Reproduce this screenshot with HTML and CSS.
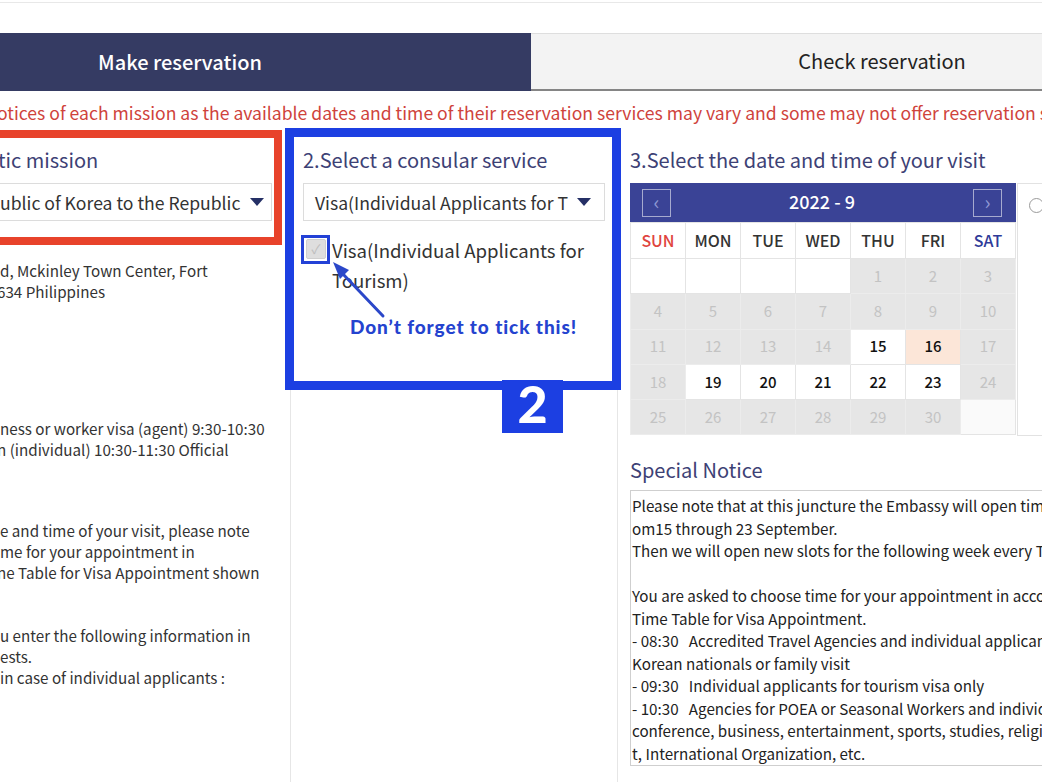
FILE: index.html
```html
<!DOCTYPE html>
<html lang="en">
<head>
<meta charset="utf-8">
<title>Reservation</title>
<link rel="stylesheet" href="styles.css">
</head>
<body>
<div class="topbar"></div>
<nav class="tabs">
  <div class="tab tab-active">Make reservation</div>
  <div class="tab tab-idle">Check reservation</div>
</nav>
<p class="warn">otices of each mission as the available dates and time of their reservation services may vary and some may not offer reservation services.</p>

<main class="cols">
  <section class="col col1">
    <h2 class="heading heading-cut">tic mission</h2>
    <div class="select select-cut"><span>ublic of Korea to the Republic</span><i class="caret"></i></div>
    <div class="info">
      <div class="ln">d, Mckinley Town Center, Fort</div>
      <div class="ln ln-cut">634 Philippines</div>
      <div class="gap gap-a"></div>
      <div class="ln">ness or worker visa (agent) 9:30-10:30</div>
      <div class="ln ln-cut">n (individual) 10:30-11:30 Official</div>
      <div class="gap gap-b"></div>
      <div class="ln">e and time of your visit, please note</div>
      <div class="ln">me for your appointment in</div>
      <div class="ln ln-cut">ne Table for Visa Appointment shown</div>
      <div class="gap gap-c"></div>
      <div class="ln">u enter the following information in</div>
      <div class="ln">ests.</div>
      <div class="ln">in case of individual applicants :</div>
    </div>
  </section>

  <section class="col col2">
    <h2 class="heading">2.Select a consular service</h2>
    <div class="select"><span>Visa(Individual Applicants for T</span><i class="caret"></i></div>
    <label class="check">
      <span class="box">&#10003;</span>
      <span class="check-label">Visa(Individual Applicants for Tourism)</span>
    </label>
  </section>

  <section class="col col3">
    <h2 class="heading">3.Select the date and time of your visit</h2>
    <div class="cal-row">
      <div class="calendar">
        <div class="cal-nav">
          <span class="nav-btn">&lsaquo;</span>
          <span class="cal-title">2022 - 9</span>
          <span class="nav-btn">&rsaquo;</span>
        </div>
        <table class="cal-table">
          <thead>
            <tr><th class="sun">SUN</th><th>MON</th><th>TUE</th><th>WED</th><th>THU</th><th>FRI</th><th class="sat">SAT</th></tr>
          </thead>
          <tbody>
            <tr><td class="empty"></td><td class="empty"></td><td class="empty"></td><td class="empty"></td><td class="off">1</td><td class="off">2</td><td class="off">3</td></tr>
            <tr><td class="off">4</td><td class="off">5</td><td class="off">6</td><td class="off">7</td><td class="off">8</td><td class="off">9</td><td class="off">10</td></tr>
            <tr><td class="off">11</td><td class="off">12</td><td class="off">13</td><td class="off">14</td><td class="on">15</td><td class="on sel">16</td><td class="off">17</td></tr>
            <tr><td class="off">18</td><td class="on">19</td><td class="on">20</td><td class="on">21</td><td class="on">22</td><td class="on">23</td><td class="off">24</td></tr>
            <tr><td class="off">25</td><td class="off">26</td><td class="off">27</td><td class="off">28</td><td class="off">29</td><td class="off">30</td><td class="empty2"></td></tr>
          </tbody>
        </table>
      </div>
      <div class="times"><span class="radio"></span></div>
    </div>
    <h2 class="heading heading-notice">Special Notice</h2>
    <div class="notice">Please note that at this juncture the Embassy will open time slots
om15 through 23 September.
Then we will open new slots for the following week every Thursday.

You are asked to choose time for your appointment in accordance with the
Time Table for Visa Appointment.
- 08:30   Accredited Travel Agencies and individual applicants
Korean nationals or family visit
- 09:30   Individual applicants for tourism visa only
- 10:30   Agencies for POEA or Seasonal Workers and individuals
conference, business, entertainment, sports, studies, religious
t, International Organization, etc.</div>
  </section>
</main>

<div class="mark mark-red"></div>
<div class="mark mark-blue"></div>
<div class="mark-badge">2</div>
<div class="mark-tick"></div>
<div class="mark-note">Don’t forget to tick this!</div>
<svg class="mark-arrow" width="1042" height="782" viewBox="0 0 1042 782">
  <line x1="342" y1="273" x2="383" y2="316" stroke="#2b47c9" stroke-width="3" stroke-linecap="round"/>
  <polygon points="333,262 349,270 340,279" fill="#2b47c9"/>
</svg>
</body>
</html>
```

FILE: styles.css
```css
* { box-sizing: border-box; }

body {
  margin: 0;
  width: 1042px;
  height: 782px;
  overflow: hidden;
  position: relative;
  background: #fff;
  font-family: "Noto Sans CJK KR", "Noto Sans", sans-serif;
  color: #333;
}

.topbar {
  height: 3px;
  border-bottom: 1px solid #e8e8e8;
}

.tabs {
  display: flex;
  margin: 30px 0 0 -171px;
  width: 1404px;
  height: 58px;
}

.tab {
  flex: 0 0 702px;
  display: flex;
  align-items: center;
  justify-content: center;
  font-size: 20px;
  padding-bottom: 2px;
}

.tab-active {
  background: #353b63;
  color: #fff;
  font-weight: 500;
}

.tab-idle {
  background: #f3f3f3;
  border-top: 1px solid #dedede;
  border-bottom: 2px solid #858585;
  color: #222;
}

.warn {
  margin: 10px 0 0 -3px;
  font-size: 17.6px;
  line-height: 24px;
  color: #cf433c;
  white-space: nowrap;
}

.cols {
  display: flex;
  margin-top: 8px;
  height: 649px;
}

.col { padding-top: 13px; }

.col1 {
  flex: 0 0 290px;
  padding-right: 18px;
}

.col2 {
  flex: 0 0 328px;
  border-left: 1px solid #e6e6e6;
  border-right: 1px solid #e6e6e6;
  padding-left: 12px;
  padding-right: 12px;
}

.col3 {
  flex: 0 0 600px;
  margin-left: 12px;
}

.heading {
  margin: 0 0 9px;
  font-size: 20px;
  line-height: 28px;
  font-weight: 400;
  color: #3d4175;
  white-space: nowrap;
}

.heading-cut { text-indent: -2px; }

.select {
  height: 38px;
  border: 1px solid #dcdcdc;
  display: flex;
  align-items: center;
  justify-content: space-between;
  padding: 0 13px 0 11px;
  font-size: 17.6px;
  color: #333;
  white-space: nowrap;
  overflow: hidden;
}

.select-cut {
  border-left: none;
  padding: 0 7px 0 0;
}

.caret {
  width: 0;
  height: 0;
  border-left: 7px solid transparent;
  border-right: 7px solid transparent;
  border-top: 8px solid #253066;
  flex: 0 0 auto;
}

.info {
  margin-top: 39px;
  font-size: 15.2px;
  line-height: 21px;
  color: #333;
  white-space: nowrap;
}

.ln-cut { text-indent: -3px; }
.gap-a { height: 116px; }
.gap-b { height: 60px; }
.gap-c { height: 42px; }

.check {
  display: flex;
  align-items: flex-start;
  gap: 6px;
  margin-top: 14px;
  padding-left: 3px;
}

.box {
  flex: 0 0 20px;
  height: 20px;
  margin-top: 4px;
  background: #dedede;
  border: 1px solid #cfcfcf;
  border-radius: 2px;
  color: #bdbdbd;
  font-size: 13px;
  line-height: 18px;
  text-align: center;
}

.check-label {
  font-size: 18.6px;
  line-height: 30px;
  color: #333;
}

.cal-row {
  display: flex;
  height: 253px;
}

.calendar {
  flex: 0 0 386px;
}

.cal-nav {
  height: 39px;
  background: #3a4396;
  display: flex;
  align-items: center;
  justify-content: space-between;
  padding: 0 14px 0 12px;
}

.nav-btn {
  width: 29px;
  height: 28px;
  border: 1px solid rgba(255, 255, 255, 0.55);
  color: #8f98d4;
  font-size: 20px;
  line-height: 24px;
  text-align: center;
}

.cal-title {
  color: #fff;
  font-size: 18px;
  font-weight: 500;
  padding-bottom: 4px;
}

.cal-table {
  width: 386px;
  border-collapse: collapse;
  table-layout: fixed;
}

.cal-table th,
.cal-table td {
  border: 1px solid #e4e4e4;
  text-align: center;
  padding: 0;
}

.cal-table th {
  height: 36px;
  padding-bottom: 2px;
  font-size: 16px;
  font-weight: 500;
  color: #333;
  background: #fff;
}

.cal-table th.sun { color: #e0443e; }
.cal-table th.sat { color: #2f3b99; }

.cal-table td {
  height: 35.3px;
  padding-bottom: 2px;
  font-size: 15px;
}

.cal-table td.off {
  background: #e6e6e6;
  color: #c3c3c3;
  border-color: #ececec;
}

.cal-table td.on {
  background: #fff;
  color: #111;
  font-weight: 500;
}

.cal-table td.sel { background: #fce6d8; }
.cal-table td.empty { background: #fff; }
.cal-table td.empty2 { background: #fafafa; }

.times {
  flex: 1;
  margin-left: 1px;
  border: 1px solid #e2e2e2;
  padding: 14px 0 0 11px;
}

.radio {
  display: block;
  width: 15px;
  height: 15px;
  border: 1px solid #9a9a9a;
  border-radius: 50%;
}

.heading-notice {
  margin: 20px 0 6px;
}

.notice {
  height: 276px;
  border: 1px solid #cfcfcf;
  border-right: none;
  padding: 3px 0 0 1px;
  font-size: 15.2px;
  line-height: 22.5px;
  color: #222;
  white-space: pre;
  overflow: hidden;
}

/* annotation overlays */
.mark {
  position: absolute;
  pointer-events: none;
}

.mark-red {
  left: -10px;
  top: 130px;
  width: 292px;
  height: 115px;
  border: 8px solid #e8432b;
}

.mark-blue {
  left: 285px;
  top: 128px;
  width: 336px;
  height: 262px;
  border: 9px solid #1c3fe2;
}

.mark-badge {
  position: absolute;
  left: 502px;
  top: 380px;
  width: 61px;
  height: 53px;
  background: #1c3fe2;
  color: #fff;
  font-family: "Lato", sans-serif;
  font-weight: 900;
  font-size: 52px;
  line-height: 46px;
  text-align: center;
}

.mark-tick {
  position: absolute;
  left: 301px;
  top: 235px;
  width: 29px;
  height: 29px;
  border: 3px solid #2341d6;
}

.mark-note {
  position: absolute;
  left: 350px;
  top: 314px;
  font-family: "Lato", sans-serif;
  font-weight: 900;
  font-size: 19px;
  letter-spacing: 0.9px;
  line-height: 26px;
  color: #2443cf;
  white-space: nowrap;
}

.mark-arrow {
  position: absolute;
  left: 0;
  top: 0;
  pointer-events: none;
}
```
